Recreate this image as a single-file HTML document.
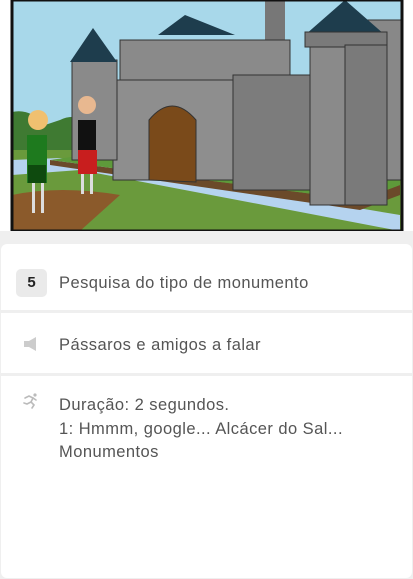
<!DOCTYPE html>
<html><head><style>
*{margin:0;padding:0;box-sizing:border-box}
body{width:413px;height:579px;background:#efefef;font-family:"Liberation Sans",sans-serif;color:#555;position:relative;overflow:hidden}
.top{position:absolute;left:0;top:0;width:413px;height:231px;background:#fff}
.row{position:absolute;left:1px;width:411px;background:#fff}
.t{position:absolute;left:58px;font-size:16.5px;letter-spacing:0.45px;color:#555;line-height:23.5px;white-space:nowrap}
</style></head><body>
<div class="top">
<svg width="413" height="231" viewBox="0 0 413 231" style="position:absolute;left:0;top:0">
<rect x="12" y="0" width="390" height="231" fill="#a8d8ea"/>
<path d="M12 112 Q30 108 45 125 L60 120 Q70 115 80 118 L80 160 L12 160Z" fill="#3f7a32"/>
<rect x="12" y="150" width="390" height="81" fill="#6a9a3c"/>
<path d="M12 160 L60 158 L400 215 L400 231 L12 231Z" fill="#b5d3ef"/>
<path d="M12 175 L80 170 L400 231 L12 231Z" fill="#6a9a3c"/>
<path d="M12 195 Q60 185 120 195 L80 231 L12 231Z" fill="#8b5a2b"/>
<path d="M50 165 L360 210 L400 195 L400 185 L360 200 L50 160Z" fill="#6b4a2a"/>
<path d="M50 160 L120 150 L400 160 L400 185 L360 200Z" fill="#5e9a3a"/>
<rect x="265" y="0" width="20" height="40" fill="#777"/>
<rect x="120" y="40" width="170" height="130" fill="#8a8a8a" stroke="#333"/>
<path d="M158 35 L185 15 L235 35Z" fill="#1e3d4d"/>
<rect x="113" y="80" width="120" height="100" fill="#8e8e8e" stroke="#333"/>
<rect x="233" y="75" width="80" height="115" fill="#7c7c7c" stroke="#333"/>
<rect x="350" y="20" width="52" height="160" fill="#888" stroke="#333"/>
<rect x="72" y="60" width="45" height="100" fill="#8a8a8a" stroke="#333"/>
<path d="M70 62 L93 28 L117 62Z" fill="#1e3d4d"/>
<rect x="310" y="45" width="50" height="160" fill="#8a8a8a" stroke="#333"/>
<path d="M305 35 L345 0 L385 35Z" fill="#1e3d4d"/>
<rect x="305" y="32" width="82" height="15" fill="#7a7a7a" stroke="#333"/>
<rect x="345" y="45" width="42" height="160" fill="#7a7a7a" stroke="#333"/>
<path d="M149 180 L149 120 Q172 92 196 120 L196 182Z" fill="#7a4a1a" stroke="#333"/>
<rect x="27" y="135" width="20" height="48" fill="#1e7a1e"/>
<circle cx="38" cy="120" r="10" fill="#f0c070"/>
<rect x="28" y="165" width="18" height="18" fill="#0e4a0e"/>
<rect x="32" y="183" width="3" height="30" fill="#ddd"/><rect x="41" y="183" width="3" height="30" fill="#ddd"/>
<rect x="78" y="120" width="18" height="32" fill="#111"/>
<circle cx="87" cy="105" r="9" fill="#e8b890"/>
<rect x="78" y="150" width="19" height="24" fill="#c81e1e"/>
<rect x="81" y="174" width="3" height="20" fill="#ddd"/><rect x="90" y="174" width="3" height="20" fill="#ddd"/>
<rect x="12" y="0" width="390" height="231" fill="none" stroke="#111" stroke-width="3"/>
</svg>
</div>
<div class="row" style="top:244px;height:66px;border-radius:6px 6px 0 0">
<div style="position:absolute;left:15px;top:25px;width:31px;height:28px;background:#eaeaea;border-radius:5px;font-weight:bold;font-size:15px;color:#222;text-align:center;line-height:28px">5</div>
<div class="t" style="top:28px">Pesquisa do tipo de monumento</div>
</div>
<div class="row" style="top:313px;height:60px">
<svg style="position:absolute;left:22px;top:23px" width="14" height="16" viewBox="0 0 14 16"><path d="M1 5 H6 L13 1 V15 L6 11 H1Z" fill="#ccc"/></svg>
<div class="t" style="top:21px">Pássaros e amigos a falar</div>
</div>
<div class="row" style="top:376px;height:202px;border-radius:0 0 6px 6px">
<svg style="position:absolute;left:21px;top:16px" width="18" height="18" viewBox="0 0 18 18" fill="none" stroke="#bbb" stroke-width="1.6" stroke-linecap="round"><circle cx="13" cy="3" r="1.6" fill="#bbb" stroke="none"/><path d="M3 6 L7 4 L11 6 L9 10 L12 13 L10 16"/><path d="M9 10 L5 12 L2 11"/><path d="M11 6 L14 8"/></svg>
<div class="t" style="top:18px">Duração: 2 segundos.<br>1: Hmmm, google... Alcácer do Sal...<br>Monumentos</div>
</div>
</body></html>
